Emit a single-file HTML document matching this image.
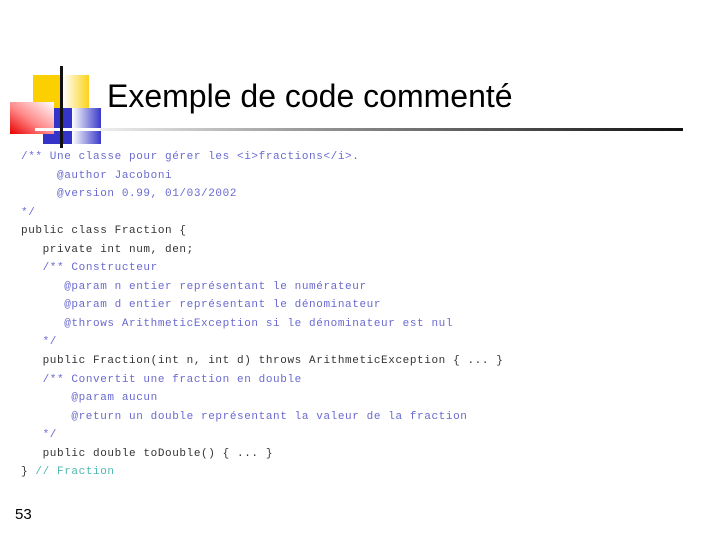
<!DOCTYPE html>
<html><head><meta charset="utf-8"><style>
body{margin:0;width:720px;height:540px;background:#fff;position:relative;overflow:hidden}
div{position:absolute}
.t{left:107px;top:78px;font-family:"Comic Sans MS","Liberation Sans",sans-serif;font-size:32px;color:#000;white-space:nowrap}
pre{position:absolute;left:21px;top:148px;margin:0;font-family:"Liberation Mono",monospace;font-size:11px;letter-spacing:0.6px;line-height:18.55px;color:#333}
.c{color:#6a6ad0}.f{color:#4cb8b0}
</style></head><body>
<div style="left:33px;top:75px;width:30px;height:33px;background:#fccf00"></div>
<div style="left:63px;top:75px;width:26px;height:33px;background:linear-gradient(90deg,#fff,#fcd21a)"></div>
<div style="left:43px;top:108px;width:29px;height:36px;background:#3434c8"></div>
<div style="left:72px;top:108px;width:29px;height:36px;background:linear-gradient(90deg,#fff,#3a3ac8)"></div>
<div style="left:10px;top:102px;width:44px;height:32px;background:linear-gradient(35deg,#e80000,#f88 45%,#fff)"></div>
<div style="left:35px;top:128px;width:66px;height:3px;background:#fff"></div>
<div style="left:60px;top:66px;width:3px;height:82px;background:#111"></div>
<div style="left:100px;top:128px;width:583px;height:3px;background:linear-gradient(90deg,#eee,#999 35%,#111)"></div>
<div class="t">Exemple de code commenté</div>
<pre><span class="c">/** Une classe pour gérer les &lt;i&gt;fractions&lt;/i&gt;.
     @author Jacoboni
     @version 0.99, 01/03/2002
*/</span>
public class Fraction {
   private int num, den;
   <span class="c">/** Constructeur
      @param n entier représentant le numérateur
      @param d entier représentant le dénominateur
      @throws ArithmeticException si le dénominateur est nul
   */</span>
   public Fraction(int n, int d) throws ArithmeticException { ... }
   <span class="c">/** Convertit une fraction en double
       @param aucun
       @return un double représentant la valeur de la fraction
   */</span>
   public double toDouble() { ... }
} <span class="f">// Fraction</span></pre>
<div style="left:15px;top:506px;font-family:'Liberation Sans',sans-serif;font-size:15px;color:#000">53</div>
</body></html>
